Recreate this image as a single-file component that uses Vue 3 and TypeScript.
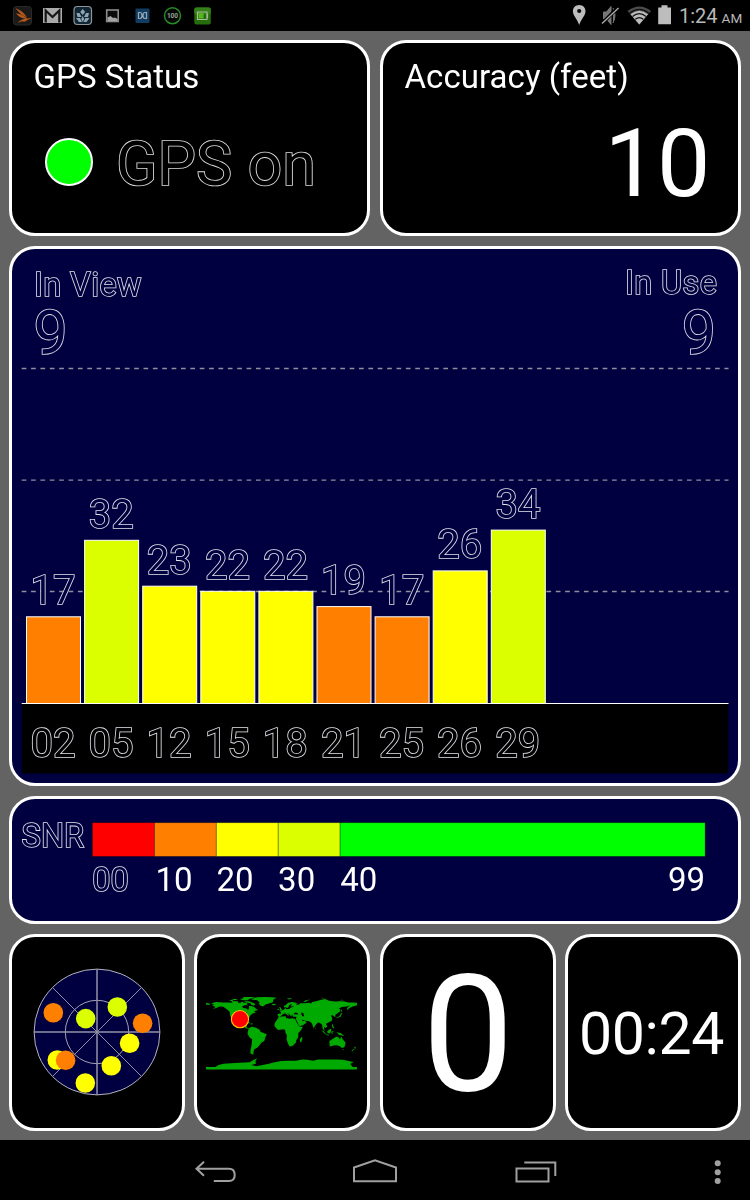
<script setup lang="ts">
interface Satellite {
  id: string
  snr: number
}

interface Dot {
  x: number
  y: number
  color: string
}

const ORANGE = '#ff8000'
const YELLOW = '#ffff00'
const LIME = '#dcff00'

const satellites: Satellite[] = [
  { id: '02', snr: 17 },
  { id: '05', snr: 32 },
  { id: '12', snr: 23 },
  { id: '15', snr: 22 },
  { id: '18', snr: 22 },
  { id: '21', snr: 19 },
  { id: '25', snr: 17 },
  { id: '26', snr: 26 },
  { id: '29', snr: 34 },
]

const snrColor = (v: number): string => (v < 20 ? ORANGE : v < 30 ? YELLOW : LIME)

const BASE = 703.5
const bars = satellites.map((s, i) => {
  const height = s.snr * 5.1
  const x = 26.5 + i * 58.1
  return { ...s, x, top: BASE - height, height, color: snrColor(s.snr), mid: x + 26.6 }
})

const segments = [
  { x: 92.4, w: 62, color: '#ff0000' },
  { x: 154.4, w: 61.9, color: ORANGE },
  { x: 216.3, w: 61.9, color: YELLOW },
  { x: 278.2, w: 61.9, color: LIME },
  { x: 340.1, w: 365, color: '#00ff00' },
]

const ticks = [
  { x: 155.4, label: '10' },
  { x: 216.4, label: '20' },
  { x: 278.1, label: '30' },
  { x: 340.2, label: '40' },
]

const sky: Dot[] = [
  { x: 53.3, y: 1012.7, color: ORANGE },
  { x: 85.7, y: 1018.6, color: LIME },
  { x: 117.3, y: 1007, color: LIME },
  { x: 142.6, y: 1023.3, color: ORANGE },
  { x: 129.6, y: 1043.3, color: YELLOW },
  { x: 111.3, y: 1065.8, color: YELLOW },
  { x: 85.3, y: 1083, color: YELLOW },
  { x: 57.3, y: 1060, color: YELLOW },
  { x: 65.6, y: 1060.3, color: ORANGE },
]

// Land outlines as longitude,latitude pairs.
const land: string[] = [
  // North America
  '-168,66 -162,70 -156,71 -140,70 -128,70 -115,69 -108,69 -98,69 -94,72 -90,69 -82,69 -82,66 -87,64 -94,60 -92,57 -82,55 -80,51 -78,55 -77,62 -70,61 -65,59 -60,54 -56,52 -66,49 -61,46 -70,43 -75,38 -76,35 -81,31 -80,26 -83,30 -90,30 -97,27 -97,22 -94,18 -90,21 -87,21 -88,16 -83,15 -83,10 -77,8 -84,8 -92,14 -105,20 -112,29 -115,31 -110,23 -117,32 -122,37 -124,48 -132,55 -140,60 -148,60 -154,57 -164,54 -157,59 -165,62 -160,65',
  '-180,69 -170,67 -172,64 -180,65',
  '-125,75 -118,76 -114,73 -103,73 -104,69 -117,69 -118,72',
  '-100,78 -90,80 -92,83 -74,83 -62,82 -77,78 -80,75 -92,75 -96,77',
  '-118,78 -108,78 -104,76 -114,75',
  '-90,73 -78,73 -68,69 -62,66 -66,62 -73,65 -74,68 -84,70',
  '-87,66 -81,65 -80,63 -86,63',
  // Greenland, Iceland
  '-73,78 -66,80 -58,82 -40,83 -22,82 -12,81 -20,76 -20,71 -28,68 -38,65 -44,60 -50,62 -54,67 -52,70 -58,75 -68,76',
  '-24,65 -20,67 -14,66 -14,64 -20,63',
  // Cuba, Hispaniola
  '-84,23 -78,23 -74,20 -78,20',
  '-73,20 -68,19 -70,17 -74,18',
  // South America
  '-78,8 -72,12 -62,10 -52,5 -50,0 -35,-6 -39,-15 -41,-22 -48,-26 -54,-34 -58,-38 -65,-42 -67,-49 -67,-55 -74,-52 -74,-45 -71,-30 -70,-18 -76,-14 -81,-5 -80,1',
  // Africa
  '-6,36 10,37 11,33 20,31 25,32 32,31 37,21 43,12 51,12 46,3 40,-3 40,-13 35,-20 35,-25 31,-29 26,-34 19,-35 15,-27 12,-18 13,-9 9,-1 9,4 4,6 -8,4 -13,9 -17,14 -16,21 -10,30',
  '49,-12 50,-16 47,-25 44,-24 44,-17',
  // Europe and Asia
  '-9,43 -9,37 -5,36 0,39 3,42 8,44 12,42 16,38 18,40 13,45 19,42 23,36 25,41 28,36 36,36 34,31 39,21 43,13 52,16 60,22 56,26 51,25 48,30 51,28 57,26 66,25 72,21 77,8 80,15 87,22 92,21 97,16 98,8 103,1 101,12 105,9 109,12 106,19 112,22 120,26 121,32 118,38 121,40 125,37 127,35 129,37 128,40 132,43 140,49 140,54 136,54 143,59 155,60 163,63 157,57 156,51 163,57 170,60 180,63 180,69 170,70 160,70 150,72 140,73 128,72 113,74 104,78 95,76 82,73 80,72 73,71 70,67 67,69 55,68 44,68 44,66 38,64 33,67 41,67 32,70 25,71 16,69 10,64 5,61 7,58 11,59 13,56 17,59 18,63 23,66 25,65 21,61 30,60 21,57 19,54 10,54 10,57 8,57 8,54 2,51 -4,48 -1,46 -2,43',
  '-5,50 1,51 1,53 -3,59 -6,58 -3,54',
  '-10,52 -6,52 -6,55 -9,54',
  '52,71 58,75 68,77 62,74 57,71',
  '12,79 20,80 26,80 18,77',
  '95,80 104,79 98,81',
  '138,75 150,75 144,76',
  // Japan, Sakhalin
  '130,32 136,34 141,36 142,40 145,43 142,45 140,40 136,36 131,34',
  '142,46 144,49 143,54 142,52',
  // South-east Asia
  '95,5 101,1 106,-6 102,-4',
  '105,-6 114,-7 114,-9 106,-8',
  '109,1 116,7 119,5 116,-4 110,-3',
  '119,1 125,1 121,-1 123,-5 119,-4',
  '120,18 122,18 126,8 122,9',
  '131,-1 141,-3 150,-10 138,-8',
  '80,9 82,7 80,6',
  // Australia, New Zealand
  '114,-22 122,-17 130,-12 136,-12 136,-15 140,-18 142,-11 146,-18 153,-26 150,-37 144,-39 138,-34 131,-32 124,-33 115,-35',
  '145,-41 148,-41 147,-44',
  '173,-35 178,-38 175,-41',
  '172,-41 174,-42 168,-47 167,-45',
  // Antarctica
  '-180,-84 -158,-84 -150,-79 -138,-76 -120,-75 -100,-74 -76,-73 -66,-67 -58,-63 -62,-70 -61,-76 -72,-79 -60,-82 -45,-79 -30,-76 -14,-72 0,-70 18,-69 34,-69 50,-66 62,-67 76,-69 88,-66 110,-66 130,-66 146,-67 160,-70 172,-72 164,-77 170,-84 180,-84 180,-90 -180,-90',
]

const landPath = land
  .map((ring) => {
    const pts = ring.split(' ').map((p) => {
      const [lon, lat] = p.split(',').map(Number)
      return `${lon} ${-lat}`
    })
    return `M${pts.join('L')}Z`
  })
  .join('')

const lakes = 'M28 -42L40 -41L38 -45L33 -46ZM47 -42L50 -37L54 -37L52 -45L47 -46ZM-88 -42L-82 -43L-84 -47L-90 -47Z'
</script>

<template>
  <div class="screen">
    <header class="status">
      <svg class="notifications" width="220" height="31" viewBox="0 0 220 31">
        <rect x="13.500" y="6.500" width="18" height="18.500" rx="3" fill="#1b1a19" stroke="#2a2a2a" />
        <path d="M16 8.500Q23 11 26.500 17Q20 14.500 16 8.500ZM16.300 13.500Q22 14 27 18.500Q20 18.500 16.300 13.500ZM18 22.500Q22 18 31 18.500Q27 19.300 25 21.500Q22 20.500 18 22.500Z" fill="#b85a1c" stroke="#b85a1c" stroke-width="0.300" />
        <rect x="43" y="8" width="19" height="15" fill="#aaa" />
        <path d="M45.700 22.500V10.500L52.500 17L59.300 10.500V22.500" fill="none" stroke="#161616" stroke-width="2.200" />
        <rect x="74" y="6.500" width="17.500" height="18" rx="3.500" fill="#122534" stroke="#8d969c" stroke-width="1.200" />
        <path d="M82.700 9l2.500 3-2.500 3-2.500-3zM76.500 13l3 0 2 4-4 0zM89 13l-3 0-2 4 4 0zM76 18l4 0 2 4-3 0zM89.500 18l-4 0-2 4 3 0zM82.700 16l1.500 3-1.500 3-1.500-3z" fill="#8ea5b3" />
        <rect x="106.700" y="10" width="11.500" height="11.500" fill="#0a0a0a" stroke="#8c8c8c" stroke-width="1.600" />
        <path d="M107.500 21V17.500L110.500 16L113 18L115 17.500L117.500 19V21Z" fill="#a5a5a5" />
        <rect x="135.500" y="8.500" width="14" height="14.500" rx="1" fill="#123d61" />
        <path d="M138.500 12.500H140Q142 12.500 142 15.500Q142 18.500 140 18.500H138.500ZM146.500 12.500H145Q143 12.500 143 15.500Q143 18.500 145 18.500H146.500Z" fill="none" stroke="#9aabb8" stroke-width="1.200" />
        <circle cx="172.500" cy="15.700" r="8" fill="#050805" stroke="#278a27" stroke-width="1.500" />
        <text x="172.500" y="18.300" class="tiny">100</text>
        <rect x="194.300" y="7.500" width="16.500" height="17" rx="2" fill="#256d0b" />
        <rect x="194.300" y="7.500" width="16.500" height="7" rx="2" fill="#34811a" />
        <path d="M197.500 12H207V19.500H197.500ZM207.500 14V18" fill="none" stroke="#a6bd9c" stroke-width="1.200" />
        <rect x="198.500" y="13" width="5" height="5.500" fill="#58b51d" />
      </svg>
      <svg class="indicators" width="105" height="31" viewBox="570 0 105 31">
        <path d="M579.200 5C583 5 585.500 7.800 585.500 11.200C585.500 15.500 581 19 579.200 25C577.400 19 572.900 15.500 572.900 11.200C572.900 7.800 575.400 5 579.200 5Z" fill="#bdbdbd" />
        <circle cx="579.200" cy="11" r="2.100" fill="#080808" />
        <path d="M603.500 12H606.500L611 6.500V24.500L606.500 19H603.500ZM613 8Q617 15 613 23" fill="#777" stroke="#777" stroke-width="1" />
        <path d="M602 23.500L617.500 8" stroke="#000" stroke-width="3.500" />
        <path d="M602 23.500L618.500 8" stroke="#aaa" stroke-width="1.400" />
        <path d="M627.500 11Q639.500 2 651 11L639.300 24.500Z" fill="#4c4c4c" />
        <path d="M630.500 14.300Q639.300 7 648 14.300L639.300 24.500Z" fill="#bcbcbc" />
        <path d="M629.500 13.200Q639.300 5.500 649 13.200M632.500 16.500Q639.300 10.700 646 16.500M635.300 19.300Q639.300 15.800 643.300 19.300" fill="none" stroke="#111" stroke-width="1.200" />
        <path d="M658.200 7.500H661.500V5.200H667.500V7.500H671V24.300H658.200Z" fill="#bdbdbd" />
      </svg>
      <span class="clock">1:24<small>AM</small></span>
    </header>

    <main class="board">
      <section class="card gps">
        <h2>GPS Status</h2>
        <div class="state">
          <span class="led"></span>
          <span class="outline big">GPS on</span>
        </div>
      </section>

      <section class="card accuracy">
        <h2>Accuracy (feet)</h2>
        <div class="feet">10</div>
      </section>

      <section class="card navy chart">
        <svg viewBox="12 249 726 534" width="726" height="534">
          <g class="grid">
            <line v-for="y in [368.5, 480.1, 591.5]" :key="y" x1="21.700" x2="728.500" :y1="y" :y2="y" />
          </g>
          <text x="34" y="295.500" class="o s33 wide">In View</text>
          <text x="33.600" y="353.600" class="o s62">9</text>
          <text x="717.300" y="293.800" class="o s33 wide end">In Use</text>
          <text x="716" y="353.600" class="o s62 end">9</text>
          <rect x="21.800" y="703.500" width="706.500" height="70" fill="#000" />
          <g v-for="b in bars" :key="b.id">
            <rect :x="b.x" :y="b.top" width="54" :height="b.height" :fill="b.color" stroke="#fff" stroke-width="1" />
            <text :x="b.mid" :y="b.top - 12.5" class="o s41 mid">{{ b.snr }}</text>
            <text :x="b.mid - 0.2" y="756.700" class="o s41 mid on-black">{{ b.id }}</text>
          </g>
          <line x1="21.700" x2="728.500" y1="703.500" y2="703.500" stroke="#fff" />
        </svg>
      </section>

      <section class="card navy legend">
        <svg viewBox="12 799 726 122" width="726" height="122">
          <text x="21.600" y="847.200" class="o s33">SNR</text>
          <rect v-for="s in segments" :key="s.x" :x="s.x" y="822.700" :width="s.w" height="33.700" :fill="s.color" stroke="#000" stroke-opacity="0.350" stroke-width="0.800" />
          <text x="92.200" y="890.700" class="o s33">00</text>
          <text v-for="t in ticks" :key="t.label" :x="t.x" y="890.700" class="solid s33">{{ t.label }}</text>
          <text x="705" y="890.700" class="solid s33 end">99</text>
        </svg>
      </section>

      <section class="card tile">
        <svg viewBox="32 967 130 130" width="130" height="130" class="sky">
          <circle cx="97" cy="1032" r="62.900" fill="#000040" stroke="#b4b4bf" stroke-width="1" />
          <circle cx="97" cy="1032" r="31.700" fill="none" stroke="#a2a2b2" stroke-width="1" />
          <path d="M52.800 987.800L141.200 1076.200M141.200 987.800L52.800 1076.200" stroke="#a2a2b2" stroke-width="0.900" />
          <path d="M97 969V1095M34 1032H160" stroke="#9393a6" stroke-width="1.500" />
          <circle v-for="(d, i) in sky" :key="i" :cx="d.x" :cy="d.y" r="9.800" :fill="d.color" />
        </svg>
      </section>

      <section class="card tile">
        <svg viewBox="-180 -90 360 180" width="151" height="75.500" class="world">
          <path :d="landPath" fill="#00aa00" />
          <path :d="lakes" fill="#000" />
          <circle cx="-99" cy="-30" r="20.500" fill="#ff0000" stroke="#ffc400" stroke-width="2.600" />
        </svg>
      </section>

      <section class="card tile"><span class="speed">0</span></section>
      <section class="card tile"><span class="timer">00:24</span></section>
    </main>

    <footer class="nav">
      <svg width="750" height="60" viewBox="0 1140 750 60" fill="none" stroke="#a0a0a0" stroke-width="2">
        <path d="M204 1161.700L196.500 1168.700L204 1175.700M196.500 1168.700H229Q234.700 1168.700 234.700 1175Q234.700 1181 229 1181H213.800" />
        <path d="M354 1181.300V1167.500L375 1160.300L396 1167.500V1181.300Z" />
        <path d="M516.500 1168.600H548.500V1181.400H516.500ZM524.300 1162.500H555.300V1176" />
        <g fill="#a0a0a0" stroke="none">
          <circle cx="717.700" cy="1163.300" r="3" />
          <circle cx="717.700" cy="1172.300" r="3" />
          <circle cx="717.700" cy="1181" r="3" />
        </g>
      </svg>
    </footer>
  </div>
</template>

<style>
body {
  background: #000;
}
</style>

<style scoped>
.screen {
  width: 750px;
  height: 1200px;
  display: flex;
  flex-direction: column;
  overflow: hidden;
  background: #000;
  color: #fff;
  font-family: Roboto, sans-serif;
}
.status {
  height: 31px;
  display: flex;
  align-items: flex-start;
  background: #000;
}
.indicators {
  margin-left: 350px;
}
.status svg {
  flex: none;
}
.tiny {
  font-size: 6.500px;
  font-weight: 700;
  fill: #99a399;
  text-anchor: middle;
}
.clock {
  margin-left: 4px;
  line-height: 33px;
  font-size: 20px;
  color: #b8b8b8;
  white-space: nowrap;
}
.clock small {
  margin-left: 4px;
  font-size: 13.500px;
}
.board {
  box-sizing: border-box;
  height: 1109px;
  padding: 9px;
  display: grid;
  grid-template-columns: repeat(4, 1fr);
  grid-template-rows: 196px 540px 128px 197px;
  row-gap: 10px;
  column-gap: 9.400px;
  background: #636363;
}
.card {
  box-sizing: border-box;
  min-width: 0;
  border: 3px solid #fff;
  border-radius: 26px;
  background: #000;
  overflow: hidden;
  will-change: transform;
}
.card svg {
  display: block;
}
.navy {
  grid-column: span 4;
  background: #000040;
}
.gps,
.accuracy {
  grid-column: span 2;
  padding: 14px 21.500px 0;
}
h2 {
  margin: 0;
  font-size: 33px;
  font-weight: 400;
  line-height: 40px;
  letter-spacing: 0.050px;
}
.state {
  display: flex;
  align-items: center;
  height: 80px;
  margin-top: 27px;
  padding-left: 11px;
}
.led {
  box-sizing: border-box;
  width: 48px;
  height: 48px;
  margin-top: -5px;
  border: 2px solid #fff;
  border-radius: 50%;
  background: #00ff00;
}
.outline {
  color: #000;
  -webkit-text-stroke: 1.700px #dedede;
  paint-order: stroke fill;
}
.big {
  margin-left: 23.500px;
  font-size: 61px;
  line-height: 80px;
}
.feet {
  margin: 17px 7.500px 0 0;
  text-align: right;
  font-size: 95px;
  line-height: 100px;
  letter-spacing: -1px;
}
.grid line {
  stroke: #8e8e9c;
  stroke-width: 1.300;
  stroke-dasharray: 4.700 4.670;
}
.o {
  fill: #000040;
  stroke: #e2e2ea;
  stroke-width: 1.600;
  paint-order: stroke fill;
}
.on-black {
  fill: #000;
}
.solid {
  fill: #fff;
}
.s33 {
  font-size: 32.500px;
}
.solid.s33 {
  font-size: 33px;
}
.s41 {
  font-size: 40px;
}
.s62 {
  font-size: 61px;
}
.wide {
  letter-spacing: 0.400px;
}
.mid {
  text-anchor: middle;
}
.end {
  text-anchor: end;
}
.tile {
  display: flex;
  align-items: center;
  justify-content: center;
}
.sky {
  margin-bottom: 1px;
}
.world {
  margin: 0 1px 1px 0;
}
.speed {
  padding-top: 4px;
  font-size: 163px;
  line-height: 192px;
}
.timer {
  margin-right: 3px;
  padding-top: 2px;
  font-size: 59px;
  line-height: 70px;
  letter-spacing: -0.400px;
}
.nav {
  height: 60px;
}
.nav svg {
  display: block;
}
</style>
